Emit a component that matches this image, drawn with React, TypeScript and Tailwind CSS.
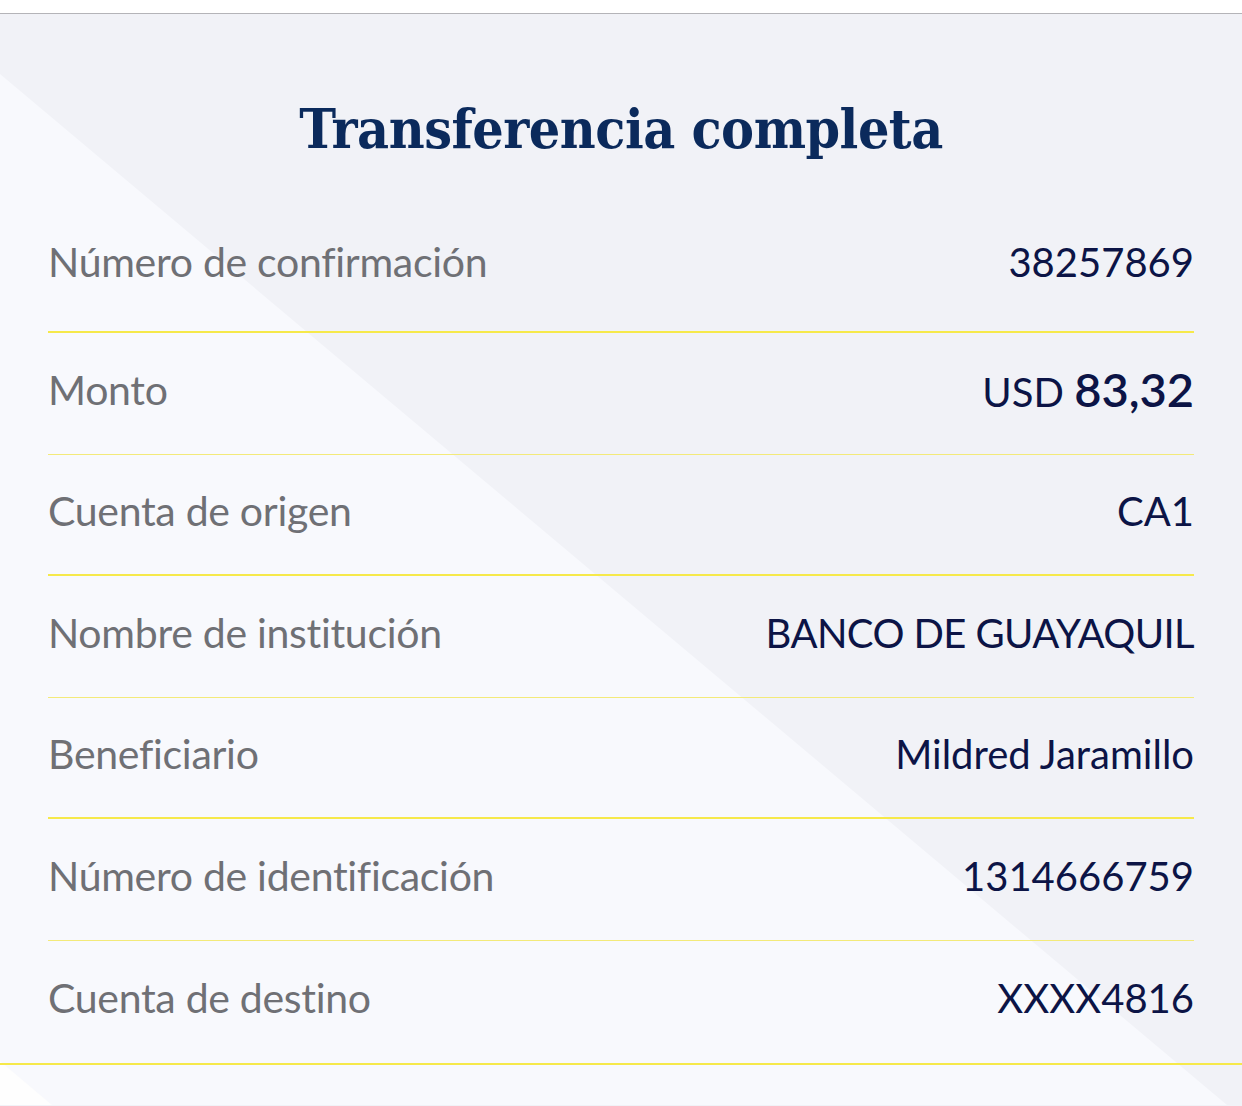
import React from "react";

const rows: { label: string; value: React.ReactNode }[] = [
  { label: "Número de confirmación", value: "38257869" },
  {
    label: "Monto",
    value: (
      <span>
        USD <span className="text-[47px] font-semibold">83,32</span>
      </span>
    ),
  },
  { label: "Cuenta de origen", value: "CA1" },
  { label: "Nombre de institución", value: <span className="tracking-[-0.6px]">BANCO DE GUAYAQUIL</span> },
  { label: "Beneficiario", value: "Mildred Jaramillo" },
  { label: "Número de identificación", value: "1314666759" },
  { label: "Cuenta de destino", value: "XXXX4816" },
];

export default function App() {
  return (
    <div className="w-[1242px] h-[1106px] bg-white overflow-hidden flex flex-col">
      <div className="h-[14px] bg-white border-b border-[#b4b4b8] shrink-0" />
      <div className="relative flex-1 bg-[#f1f2f7]">
        <svg
          className="absolute inset-0"
          width="1242"
          height="1091"
          viewBox="0 15 1242 1091"
          preserveAspectRatio="none"
        >
          <polygon points="0,75 1227,1106 0,1106" fill="#f8f9fd" />
          <polygon points="0,1062 52,1106 0,1106" fill="#fefefe" />
        </svg>
        <div className="relative flex flex-col">
          <h1
            className="text-center text-[#0b2a5c] font-bold text-[55px] leading-[70px] pt-[80px] tracking-[-0.5px]"
            style={{ fontFamily: '"DejaVu Serif Condensed", "DejaVu Serif", serif' }}
          >
            Transferencia completa
          </h1>
          <div className="mt-[50px] px-[48px] flex flex-col" style={{ fontFamily: 'Lato, "Open Sans", sans-serif' }}>
            {rows.map((r, i) => (
              <div
                key={r.label}
                className={
                  "flex items-center justify-between " +
                  (i === 0
                    ? "h-[119px] pb-[22px] border-b-2 border-[#f6e94a]"
                    : i === 6
                    ? "h-[122px] pb-[8px]"
                    : i % 2 === 1
                    ? "h-[122px] pb-[8px] border-b border-[#f3ea7a]"
                    : "h-[121px] pb-[8px] border-b-2 border-[#f6e94a]")
                }
              >
                <span className="text-[41px] text-[#6f7075] tracking-[-0.3px]">{r.label}</span>
                <span className="text-[40px] text-[#0c1446]">{r.value}</span>
              </div>
            ))}
          </div>
          <div className="h-[2px] bg-[#f6e94a] w-full" />
        </div>
      </div>
    </div>
  );
}
